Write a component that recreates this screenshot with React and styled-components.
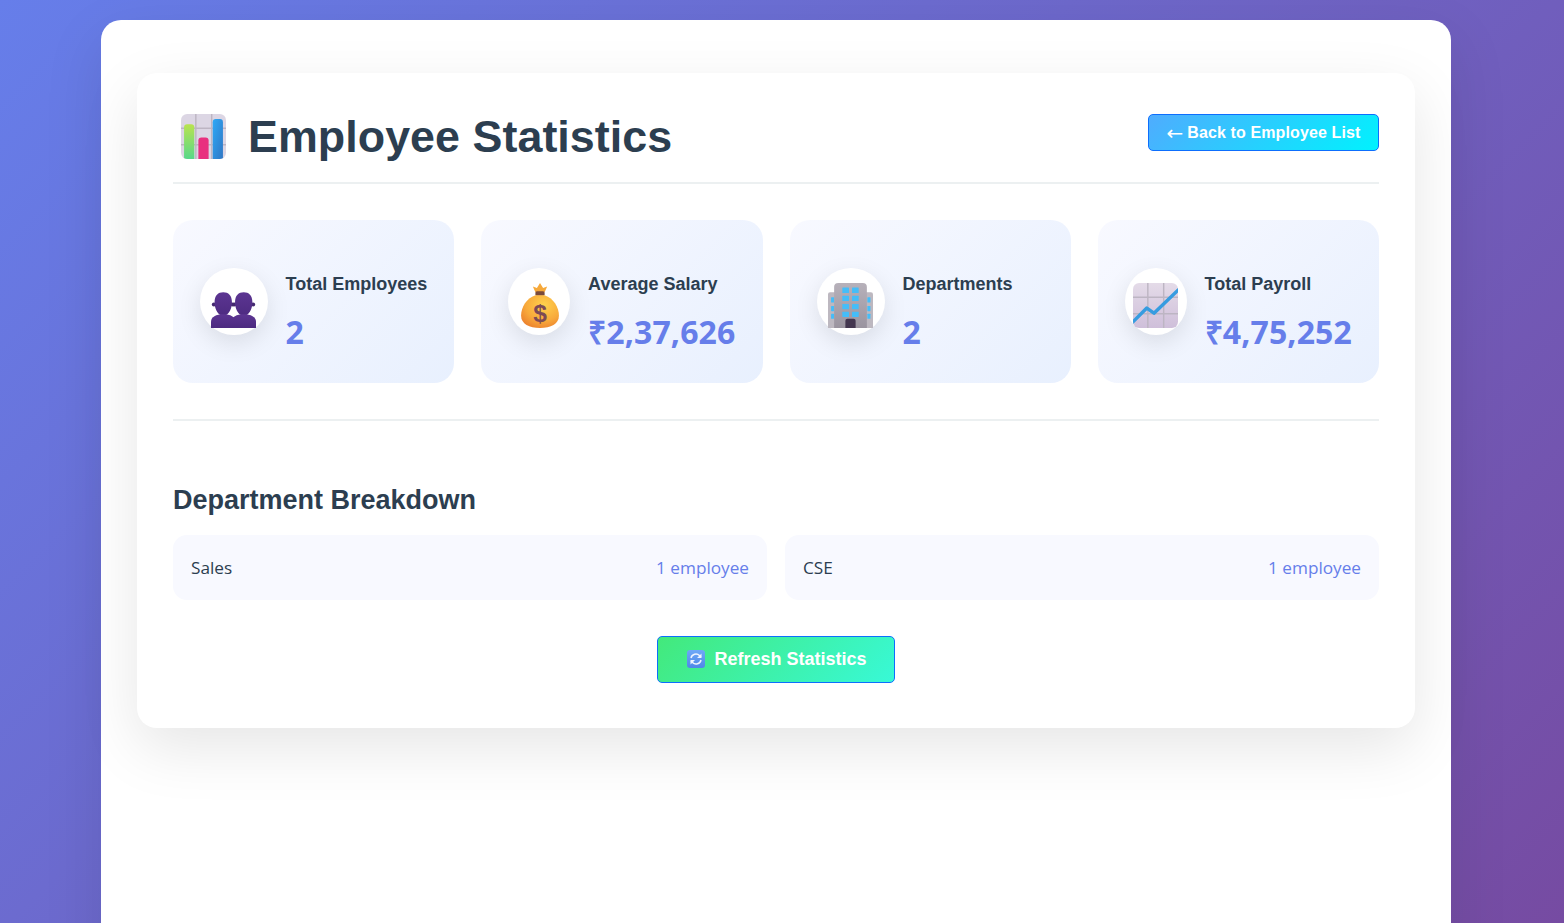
import React from "react";
import styled, { createGlobalStyle } from "styled-components";

const Global = createGlobalStyle`
  html, body { margin: 0; padding: 0; height: 100%; overflow: hidden; }
  body { background: linear-gradient(135deg, #667eea 0%, #764ba2 100%); font-family: "Open Sans", sans-serif; padding-right: 12px; }
  * { box-sizing: border-box; }
`;
const Sheet = styled.div`
  width: 1350px; margin: 20px auto 0; min-height: 960px;
  background: #fff; border-radius: 20px; padding: 53px 36px;
  box-shadow: 0 20px 60px rgba(0,0,0,.1);
`;
const Panel = styled.main`
  background: #fff; border-radius: 20px; padding: 36px;
  box-shadow: 0 20px 60px rgba(0,0,0,.1);
  height: 655px;
`;
const Header = styled.header`
  display: flex; justify-content: space-between; align-items: flex-start;
  height: 75px; border-bottom: 2px solid #ecf0f1;
`;
const Title = styled.h1`
  margin: 0; display: flex; align-items: center; gap: 22px; padding-left: 8px;
  font: 700 44.8px/54px "Liberation Sans", Arial, sans-serif; letter-spacing: .05px; color: #2c3e50;
  svg { flex: none; }
`;
const Button = styled.button`
  border: 1px solid #0d6efd; border-radius: 5px; color: #fff;
  font: 700 16px/18px "Liberation Sans", Arial, sans-serif;
  display: inline-flex; align-items: center; justify-content: center;
`;
const BackButton = styled(Button)`
  width: 231px; height: 37px; padding: 0; margin-top: 5px; gap: 4px; letter-spacing: .12px;
  background: linear-gradient(135deg, #4facfe 0%, #00f2fe 100%);
`;
const Arrow = styled.span`
  font: 400 20px/18px "DejaVu Sans", sans-serif; letter-spacing: 0;
`;
const RefreshButton = styled(Button)`
  width: 238px; height: 47px; gap: 9px; font-size: 18px; padding: 0 0 2px 2px;
  background: linear-gradient(135deg, #43e97b 0%, #38f9d7 100%);
`;
const StatGrid = styled.section`
  display: grid; grid-template-columns: repeat(4, 1fr); gap: 27px;
  margin-top: 36px; padding-bottom: 36px; border-bottom: 2px solid #ecf0f1;
`;
const Card = styled.article`
  height: 163px; padding: 27px; border-radius: 20px; display: flex; align-items: center; gap: 18px;
  background: linear-gradient(135deg, #f8f9ff 0%, #e8f0fe 100%);
`;
const Bubble = styled.div`
  flex: 0 1 ${(p) => p.$basis}px; height: 67px; border-radius: 50%; background: #fff;
  display: flex; align-items: center; justify-content: center;
  box-shadow: 0 8px 25px rgba(0,0,0,.1);
  svg { margin-top: 8px; flex: none; }
`;
const StatText = styled.div`
  display: flex; flex-direction: column; gap: 18px; padding-top: 21px;
`;
const Label = styled.div`
  font: 700 18px/22px "Liberation Sans", Arial, sans-serif; color: #2c3e50; white-space: nowrap;
`;
const Value = styled.div`
  font: 700 32px/38px "Open Sans", sans-serif; letter-spacing: .15px; color: #667eea; white-space: nowrap;
`;
const Section = styled.section`
  margin-top: 61px;
`;
const Heading = styled.h2`
  margin: 0 0 17px; font: 700 27px/36px "Liberation Sans", Arial, sans-serif; color: #2c3e50;
`;
const DeptGrid = styled.div`
  display: grid; grid-template-columns: 1fr 1fr; gap: 18px;
`;
const Dept = styled.div`
  height: 65px; padding: 0 18px; border-radius: 14px; background: #f8f9ff;
  display: flex; align-items: center; justify-content: space-between;
  font-size: 17.2px; font-weight: 500; color: #2c3e50;
`;
const Count = styled.span`
  color: #667eea;
`;
const Actions = styled.div`
  display: flex; justify-content: center; margin-top: 36px;
`;

const Grid = ({ c = "#bdb5c3" }) => (
  <path d="M14.500 0V44M30 0V44M0 14H44M0 30H44" stroke={c} strokeWidth="1.400" />
);

const BarsIcon = () => (
  <svg width="45" height="45" viewBox="0 0 44 44">
    <defs>
      <linearGradient id="bg1" x1="0" y1="0" x2="0" y2="1"><stop offset="0" stopColor="#b9e34f" /><stop offset="1" stopColor="#58d88a" /></linearGradient>
      <linearGradient id="bb1" x1="0" y1="0" x2="1" y2="1"><stop offset="0" stopColor="#2ea9f7" /><stop offset="1" stopColor="#3077c4" /></linearGradient>
      <clipPath id="cb1"><rect width="44" height="44" rx="6" /></clipPath>
    </defs>
    <g clipPath="url(#cb1)">
      <rect width="44" height="44" fill="#dcd6e4" />
      <Grid />
      <path d="M3 44V13a3 3 0 0 1 3-3h4a3 3 0 0 1 3 3v31z" fill="url(#bg1)" />
      <path d="M17 44V26a3 3 0 0 1 3-3h4a3 3 0 0 1 3 3v18z" fill="#e8307f" />
      <path d="M31 44V8a3 3 0 0 1 3-3h4a3 3 0 0 1 3 3v36z" fill="url(#bb1)" />
    </g>
  </svg>
);

const PeopleIcon = () => (
  <svg width="45" height="45" viewBox="0 0 44 44">
    <defs>
      <linearGradient id="pp" x1="0" y1="0" x2="0" y2="1"><stop offset="0" stopColor="#5c3592" /><stop offset="1" stopColor="#4c2a80" /></linearGradient>
    </defs>
    {[20, 0].map((x) => (
      <g key={x} transform={`translate(${x} 0)`}>
        <circle cx="2.800" cy="21" r="2" fill="#43296f" />
        <circle cx="21.200" cy="21" r="2" fill="#43296f" />
        <path d="M3.500 19c0-7 3.500-10 8.500-10s8.500 3 8.500 10c0 6-3 11-5.500 12v3h-6v-3c-2.500-1-5.500-6-5.500-12z" fill="url(#pp)" />
        <path d="M0 44v-6c0-5 5-7.500 12-7.500s12 2.500 12 7.500v6z" fill="url(#pp)" />
      </g>
    ))}
  </svg>
);

const BagIcon = () => (
  <svg width="45" height="45" viewBox="0 0 44 44">
    <defs>
      <radialGradient id="bag" cx=".6" cy=".3" r=".8"><stop offset="0" stopColor="#ffd24d" /><stop offset=".6" stopColor="#f8a93b" /><stop offset="1" stopColor="#ea7c2c" /></radialGradient>
    </defs>
    <path d="M15.500 3.500l4 1.500L22.500 0l3 5 4-1.500L27 9h-9z" fill="#f6a93b" />
    <rect x="18" y="8" width="9" height="4.500" rx="1.500" fill="#7a4a3a" />
    <path d="M18 12C9 15 4 24 4 32c0 8 8 12 18.500 12S41 40 41 32c0-8-5-17-14-20z" fill="url(#bag)" />
    <text x="22.500" y="38" textAnchor="middle" fontFamily="Liberation Sans, sans-serif" fontSize="24" fontWeight="700" fill="#7c4a55">$</text>
  </svg>
);

const Windows = ({ xs, ys, w, h }) =>
  ys.flatMap((y) => xs.map((x) => <rect key={`${x}-${y}`} x={x} y={y} width={w} height={h} rx=".5" fill="#45bdf8" />));

const BuildingIcon = () => (
  <svg width="45" height="45" viewBox="0 0 44 44">
    <defs>
      <linearGradient id="bd" x1="0" y1="0" x2="0" y2="1"><stop offset="0" stopColor="#b7b1ba" /><stop offset="1" stopColor="#9a949f" /></linearGradient>
    </defs>
    <path d="M0 44V11a2 2 0 0 1 2-2h40a2 2 0 0 1 2 2v33z" fill="#bdb8c0" />
    <Windows xs={[3, 38.500]} ys={[14, 22.500, 30]} w={3} h={5} />
    <path d="M6 44V4a4 4 0 0 1 4-4h24a4 4 0 0 1 4 4v40z" fill="url(#bd)" />
    <Windows xs={[14, 23.500]} ys={[4.500, 12.500, 20.500, 28]} w={6.500} h={5.200} />
    <path d="M17 44V37a2 2 0 0 1 2-2h6a2 2 0 0 1 2 2v7z" fill="#43364f" />
  </svg>
);

const TrendIcon = () => (
  <svg width="45" height="45" viewBox="0 0 44 44">
    <defs>
      <clipPath id="ct"><rect width="44" height="44" rx="6" /></clipPath>
      <linearGradient id="tg" x1="0" y1="0" x2="0" y2="1"><stop offset="0" stopColor="#e4dbe8" /><stop offset="1" stopColor="#cfbfda" /></linearGradient>
    </defs>
    <g clipPath="url(#ct)">
      <rect width="44" height="44" fill="url(#tg)" />
      <Grid />
      <path d="M-1 39L13.500 24.500L20.500 29.500L45 6" fill="none" stroke="#379ce0" strokeWidth="3.400" strokeLinejoin="round" />
    </g>
  </svg>
);

const RefreshIcon = () => (
  <svg width="18" height="18" viewBox="0 0 18 18">
    <defs>
      <linearGradient id="rf" x1="0" y1="0" x2="0" y2="1"><stop offset="0" stopColor="#6ea8f7" /><stop offset="1" stopColor="#4f87e8" /></linearGradient>
    </defs>
    <rect width="18" height="18" rx="3" fill="url(#rf)" />
    <path d="M4 8a5 5 0 0 1 8.500-2.500L14 7M14 10a5 5 0 0 1-8.500 2.500L4 11" fill="none" stroke="#eef4ff" strokeWidth="1.500" />
    <path d="M14.500 3.500V8H10zM3.500 14.500V10H8z" fill="#eef4ff" />
  </svg>
);

const stats = [
  { label: "Total Employees", value: "2", Icon: PeopleIcon, basis: 69.5 },
  { label: "Average Salary", value: "₹2,37,626", Icon: BagIcon, basis: 68 },
  { label: "Departments", value: "2", Icon: BuildingIcon, basis: 68 },
  { label: "Total Payroll", value: "₹4,75,252", Icon: TrendIcon, basis: 68 },
];

export default function App() {
  return (
    <>
      <Global />
      <Sheet>
        <Panel>
          <Header>
            <Title><BarsIcon />Employee Statistics</Title>
            <BackButton><Arrow>←</Arrow>Back to Employee List</BackButton>
          </Header>
          <StatGrid>
            {stats.map(({ label, value, Icon, basis }) => (
              <Card key={label}>
                <Bubble $basis={basis}><Icon /></Bubble>
                <StatText>
                  <Label>{label}</Label>
                  <Value>{value}</Value>
                </StatText>
              </Card>
            ))}
          </StatGrid>
          <Section>
            <Heading>Department Breakdown</Heading>
            <DeptGrid>
              <Dept>Sales<Count>1 employee</Count></Dept>
              <Dept>CSE<Count>1 employee</Count></Dept>
            </DeptGrid>
          </Section>
          <Actions>
            <RefreshButton><RefreshIcon />Refresh Statistics</RefreshButton>
          </Actions>
        </Panel>
      </Sheet>
    </>
  );
}
